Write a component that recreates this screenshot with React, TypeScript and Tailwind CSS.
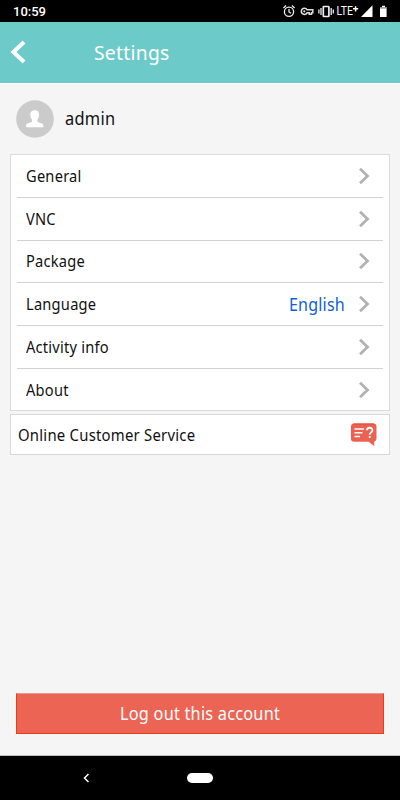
const rows = [
  { label: "General" },
  { label: "VNC" },
  { label: "Package" },
  { label: "Language", value: "English" },
  { label: "Activity info" },
  { label: "About" },
];

function StatusIcons() {
  return (
    <svg width="110" height="22" viewBox="280 0 110 22" fill="none">
      <g stroke="#eee" strokeWidth="1.3">
        <circle cx="289" cy="11.7" r="4.6" />
        <path d="M289 9v3l2 1.3M283.4 8l2.7-2.4M294.6 8l-2.7-2.4" />
      </g>
      <path
        d="M304.3 8.2a3.1 3.1 0 1 0 2.9 4.5h2v1.5h2.3v-1.5h1.3V9.8h-5.6a3.1 3.1 0 0 0-2.9-1.6z"
        stroke="#ddd"
        strokeWidth="1.5"
      />
      <circle cx="304.3" cy="11.3" r="1.1" fill="#ddd" />
      <rect x="323.3" y="6.5" width="5.6" height="10" rx="0.6" stroke="#eee" strokeWidth="1.7" />
      <path d="M321 8v7M318.9 9.5v4M331.2 8v7M333.3 9.5v4" stroke="#eee" strokeWidth="1.3" />
      <text
        x="336.6"
        y="15.4"
        fill="#fff"
        fontFamily="Roboto, sans-serif"
        fontSize="12.5"
        textLength="16.4"
        lengthAdjust="spacingAndGlyphs"
      >
        LTE
      </text>
      <path d="M353 8.8h5.2M355.6 6.2v5.2" stroke="#fff" strokeWidth="1.5" />
      <path d="M361 17h11.5V5.2z" fill="#fff" />
      <path d="M380 7.3h2V5.8h3v1.5h1.6V17H380z" fill="#fff" />
      <path d="M380 7.3h6.6v1.2H380z" fill="#777" />
    </svg>
  );
}

function Chevron() {
  return (
    <svg width="12" height="18" viewBox="0 0 12 18" fill="none">
      <path d="M1 1.8 8.5 9 1 16.2" stroke="#b2b2b2" strokeWidth="2.8" />
    </svg>
  );
}

function ChatIcon() {
  return (
    <svg width="28" height="24" viewBox="0 0 28 24" fill="none">
      <path
        d="M4 .5h19.500a3 3 0 0 1 3 3v12a3 3 0 0 1-2.200 3V23L18.500 18.800H4a3 3 0 0 1-3-3V3.500a3 3 0 0 1 3-3z"
        fill="#eb6253"
      />
      <path d="M3.500 1h20.500" stroke="#dd4b39" />
      <path d="M4.500 6h9.500M4.500 9.800h8M4.500 13.500h5.500" stroke="#fff" strokeWidth="1.5" />
      <path
        d="M17 7.200c.2-3.400 5.500-3.200 5.400.1 0 2.200-2.700 2-2.700 4.500M19.700 13v2"
        stroke="#fff"
        strokeWidth="1.8"
      />
    </svg>
  );
}

export default function App() {
  return (
    <div className="flex h-[800px] w-[400px] flex-col overflow-hidden bg-[#f5f5f5] font-['Noto_Sans',sans-serif] text-[#111]">
      <div className="flex h-[22px] shrink-0 items-center justify-between bg-black pr-[10px] pl-[13px]">
        <span className="pt-px font-['Roboto',sans-serif] text-[13px] leading-[22px] font-medium text-white">
          10:59
        </span>
        <StatusIcons />
      </div>

      <header className="flex h-[61px] shrink-0 items-center bg-[#6ccbc9] pl-[10px]">
        <svg width="17" height="26" viewBox="0 0 17 26" fill="none">
          <path d="M14 2 3.5 12 14 22" stroke="#fff" strokeWidth="4" />
        </svg>
        <h1 className="ml-[66.5px] origin-left scale-x-[0.94] text-[20.5px] leading-[27px] tracking-[0.3px] text-white">
          Settings
        </h1>
      </header>

      <main className="flex flex-1 flex-col border-t border-white">
        <div className="flex h-[70px] items-center pl-4">
          <svg width="38" height="38" viewBox="0 0 38 38">
            <circle cx="19" cy="19" r="18.8" fill="#cbcbcb" />
            <path
              d="M18.7 10.200c3 0 4.600 2 4.400 4.800-.1 2.200-.9 4-1.700 4.800v2c1.400 1 5.700 1.500 5.900 3.200v2.300H10.200V25c.2-1.700 4.500-2.200 5.900-3.200v-2c-.8-.8-1.700-2.600-1.800-4.800-.2-2.800 1.400-4.800 4.400-4.800z"
              fill="#fff"
            />
          </svg>
          <span className="mb-px ml-[11px] origin-left scale-x-[0.91] text-[18px] tracking-[0.3px]">
            admin
          </span>
        </div>

        <ul className="mx-[10px] h-[257px] border border-[#dcdcdc] bg-white px-[6px]">
          {rows.map((row) => (
            <li
              key={row.label}
              className="flex h-[42.75px] items-center border-b border-[#d2d2d2] pr-3 pl-[9px] text-[16px] last:border-b-0"
            >
              <span className="origin-left scale-x-[0.915] tracking-[0.25px]">
                {row.label}
              </span>
              {row.value && (
                <span className="mb-px ml-auto origin-right scale-x-[0.92] text-[17.5px] tracking-[0.2px] text-[#1060d8]">
                  {row.value}
                </span>
              )}
              <span className={row.value ? "ml-[14px]" : "ml-auto"}>
                <Chevron />
              </span>
            </li>
          ))}
        </ul>

        <div className="mx-[10px] mt-[3px] flex h-[41px] items-center justify-between border border-[#d9d9d9] bg-white pr-[11px] pl-[7px] text-[16px]">
          <span className="origin-left scale-x-[0.93] tracking-[0.25px]">
            Online Customer Service
          </span>
          <ChatIcon />
        </div>

        <button className="mx-4 mt-auto mb-[21px] h-[41px] border border-[#e93c17] border-t-[#e49a90] bg-[#eb6454] text-[17.5px] text-white">
          <span className="inline-block scale-x-[0.93] tracking-[0.25px]">
            Log out this account
          </span>
        </button>
      </main>

      <nav className="flex h-[45px] shrink-0 items-center border-t border-[#b8c0bc] bg-black pl-[82px]">
        <svg width="8" height="12" viewBox="0 0 8 12" fill="none">
          <path d="M6.5 2 2.5 6l4 4" stroke="#fff" strokeWidth="1.5" />
        </svg>
        <div className="ml-[97px] h-[10px] w-[26px] rounded-full bg-white" />
      </nav>
    </div>
  );
}
